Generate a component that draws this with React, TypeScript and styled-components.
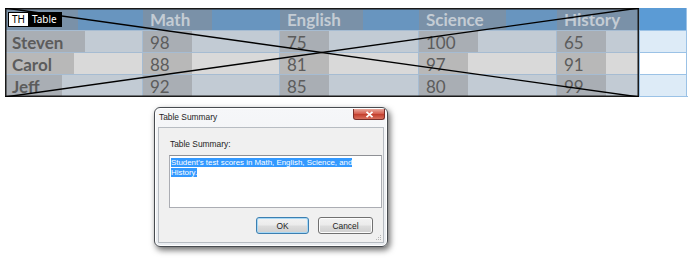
import React from "react";
import styled, { createGlobalStyle } from "styled-components";

type RowKind = "head" | "blue" | "white";

const palette: Record<RowKind, { base: string; box: string; extra: string; line: string }> = {
  head: { base: "#6895bf", box: "#7a91a8", extra: "#5b9bd5", line: "#6895bf" },
  blue: { base: "#c2cbd4", box: "#a9aeb4", extra: "#ddebf7", line: "#a6bcd2" },
  white: { base: "#d9d9d9", box: "#b8b8b8", extra: "#ffffff", line: "#a6bcd2" },
};

const Global = createGlobalStyle`
  html, body { margin: 0; padding: 0; background: #ffffff; }
  body { width: 700px; height: 258px; overflow: hidden; font-family: Lato, "Noto Sans", sans-serif; }
`;

const Page = styled.div`
  display: flex;
  flex-direction: column;
  align-items: flex-start;
  padding: 8px 0 0 5px;
`;

const TableWrap = styled.div`
  position: relative;
  width: 683px;
`;

const Grid = styled.div`
  display: grid;
  grid-template-columns: 137px 137px 139px 138px 83px 48px;
  grid-auto-rows: 22px;
  border-bottom: 1px solid #9bc2e6;
`;

const Cell = styled.div<{ $kind: RowKind; $first?: boolean; $extra?: boolean }>`
  box-sizing: border-box;
  display: flex;
  align-items: stretch;
  background: ${(p) => (p.$extra ? palette[p.$kind].extra : palette[p.$kind].base)};
  border-left: ${(p) => (p.$first ? "none" : `1px solid ${p.$extra && p.$kind !== "head" ? "#9bc2e6" : palette[p.$kind].line}`)};
  border-right: ${(p) => (p.$extra ? "1px solid #9bc2e6" : "none")};
  border-top: ${(p) => (p.$kind === "head" ? "none" : `1px solid ${p.$extra ? "#9bc2e6" : palette[p.$kind].line}`)};
`;

const TextBox = styled.div<{ $kind: RowKind; $bold?: boolean; $min?: number }>`
  display: flex;
  align-items: center;
  padding: 1px 22px 0 7px;
  min-width: ${(p) => p.$min ?? 0}px;
  box-sizing: border-box;
  background: ${(p) => palette[p.$kind].box};
  color: ${(p) => (p.$kind === "head" ? "#c4ccd4" : "#5c5c5c")};
  font-weight: ${(p) => (p.$bold ? 700 : 400)};
  font-size: 17px;
  line-height: 1;
  white-space: nowrap;
`;

const Cross = styled.svg`
  position: absolute;
  left: 0;
  top: 0;
  width: 634px;
  height: 89px;
  pointer-events: none;
`;

const Tag = styled.div`
  position: absolute;
  left: 3px;
  top: 4px;
  display: flex;
  height: 15px;
  font-family: "Noto Sans", sans-serif;
  font-size: 10px;
  line-height: 13px;
  border: 1px solid #000;
  box-sizing: border-box;
`;

const TagPart = styled.span<{ $dark?: boolean }>`
  display: flex;
  align-items: center;
  padding: 0 ${(p) => (p.$dark ? 4 : 3)}px;
  background: ${(p) => (p.$dark ? "#000" : "#fff")};
  color: ${(p) => (p.$dark ? "#fff" : "#000")};
`;

const Window = styled.div`
  margin: 10px 0 0 149px;
  width: 234px;
  height: 140px;
  box-sizing: border-box;
  border: 1px solid #474b50;
  border-radius: 6px;
  background: linear-gradient(#f6f7f9, #e9ecf0);
  box-shadow: 2px 3px 6px rgba(0, 0, 0, 0.6), inset 0 0 0 1px #ffffff;
  display: flex;
  flex-direction: column;
  padding: 0 3px 3px 3px;
  font-family: "Liberation Sans", Arial, sans-serif;
`;

const TitleBar = styled.div`
  height: 19px;
  display: flex;
  align-items: flex-start;
  justify-content: space-between;
`;

const Title = styled.span`
  font-size: 8.4px;
  color: #1e1e1e;
  padding: 4px 0 0 1px;
`;

const CloseBtn = styled.div`
  width: 32px;
  height: 11px;
  margin: 1px -1px 0 0;
  border: 1px solid #7a2f2a;
  border-top: none;
  border-radius: 0 0 3px 3px;
  box-sizing: border-box;
  background: linear-gradient(#e9a99d, #d4594a 50%, #c3402f 55%, #d9705e);
  display: flex;
  align-items: center;
  justify-content: center;
`;

const Client = styled.div`
  flex: 1;
  box-sizing: border-box;
  border: 1px solid #b7bcc2;
  background: #f0f0f0;
  display: flex;
  flex-direction: column;
  padding: 10px 10px 0 10px;
  position: relative;
`;

const Label = styled.div`
  font-size: 8.4px;
  color: #1e1e1e;
  margin-left: 1px;
  line-height: 12px;
`;

const TextArea = styled.div`
  margin-top: 5px;
  width: 213px;
  height: 53px;
  box-sizing: border-box;
  border: 1px solid #abadb3;
  border-top-color: #8e9095;
  background: #ffffff;
  padding: 2px 1px;
  font-size: 7.9px;
  line-height: 10px;
`;

const Selected = styled.span`
  background: #3399ff;
  color: #ffffff;
`;

const Buttons = styled.div`
  display: flex;
  justify-content: flex-end;
  gap: 9px;
  margin-top: 9px;
  width: 204px;
`;

const Button = styled.div<{ $default?: boolean; $w: number }>`
  width: ${(p) => p.$w}px;
  height: 17px;
  box-sizing: border-box;
  border: 1px solid ${(p) => (p.$default ? "#3c7fb1" : "#707070")};
  border-radius: 3px;
  background: linear-gradient(#f2f2f2 0%, #ebebeb 48%, #dddddd 52%, #cfcfcf 100%);
  box-shadow: inset 0 0 0 1px ${(p) => (p.$default ? "#a7d8f5" : "#fcfcfc")};
  display: flex;
  align-items: center;
  justify-content: center;
  font-size: 8.4px;
  color: #1e1e1e;
`;

const Grip = styled.svg`
  position: absolute;
  right: 1px;
  bottom: 1px;
`;

const rows: { kind: RowKind; cells: string[] }[] = [
  { kind: "blue", cells: ["Steven", "98", "75", "100", "65"] },
  { kind: "white", cells: ["Carol", "88", "81", "97", "91"] },
  { kind: "blue", cells: ["Jeff", "92", "85", "80", "99"] },
];

const headers = ["Math", "English", "Science", "History"];

export default function App() {
  return (
    <>
      <Global />
      <Page>
        <TableWrap>
          <Grid>
            <Cell $kind="head" $first>
              <TextBox $kind="head" $bold $min={73} />
            </Cell>
            {headers.map((h) => (
              <Cell key={h} $kind="head">
                <TextBox $kind="head" $bold>{h}</TextBox>
              </Cell>
            ))}
            <Cell $kind="head" $extra />
            {rows.map((r) => (
              <React.Fragment key={r.cells[0]}>
                {r.cells.map((c, i) => (
                  <Cell key={i} $kind={r.kind} $first={i === 0}>
                    <TextBox $kind={r.kind} $bold={i === 0}>{c}</TextBox>
                  </Cell>
                ))}
                <Cell $kind={r.kind} $extra />
              </React.Fragment>
            ))}
          </Grid>
          <Cross viewBox="0 0 634 89">
            <rect x="0.75" y="0.75" width="632.5" height="87.5" fill="none" stroke="#1a1a1a" strokeWidth="1.5" />
            <line x1="0" y1="0" x2="634" y2="89" stroke="#000" strokeWidth="1.4" />
            <line x1="0" y1="89" x2="634" y2="0" stroke="#000" strokeWidth="1.4" />
          </Cross>
          <Tag>
            <TagPart>TH</TagPart>
            <TagPart $dark>Table</TagPart>
          </Tag>
        </TableWrap>
        <Window>
          <TitleBar>
            <Title>Table Summary</Title>
            <CloseBtn>
              <svg width="9" height="7" viewBox="0 0 9 7">
                <path d="M1.5 0.8 L7.5 6.2 M7.5 0.8 L1.5 6.2" stroke="#ffffff" strokeWidth="1.8" />
              </svg>
            </CloseBtn>
          </TitleBar>
          <Client>
            <Label>Table Summary:</Label>
            <TextArea>
              <Selected>Student's test scores in Math, English, Science, and</Selected>
              <br />
              <Selected>History.</Selected>
            </TextArea>
            <Buttons>
              <Button $default $w={53}>OK</Button>
              <Button $w={55}>Cancel</Button>
            </Buttons>
            <Grip width="8" height="8" viewBox="0 0 8 8">
              <g fill="#b5b5b5">
                <rect x="6" y="2" width="1" height="1" />
                <rect x="4" y="4" width="1" height="1" />
                <rect x="6" y="4" width="1" height="1" />
                <rect x="2" y="6" width="1" height="1" />
                <rect x="4" y="6" width="1" height="1" />
                <rect x="6" y="6" width="1" height="1" />
              </g>
            </Grip>
          </Client>
        </Window>
      </Page>
    </>
  );
}
